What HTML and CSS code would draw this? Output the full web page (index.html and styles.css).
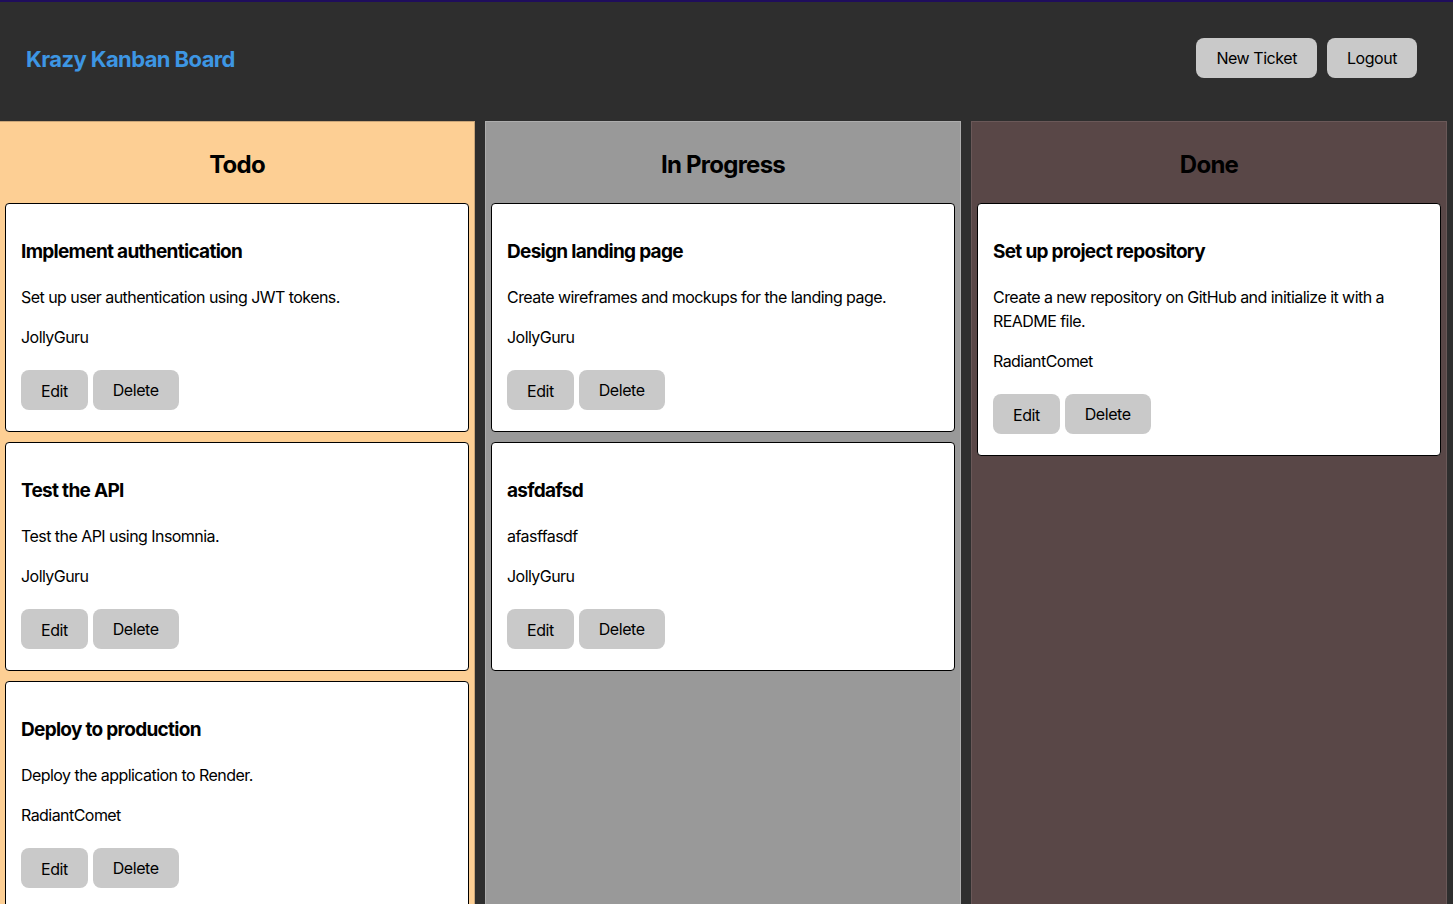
FILE: index.html
```html
<!DOCTYPE html>
<html lang="en">
<head>
<meta charset="utf-8">
<title>Krazy Kanban Board</title>
<link rel="stylesheet" href="styles.css">
</head>
<body>
<header class="nav">
  <h1 class="brand">Krazy Kanban Board</h1>
  <div class="nav-actions">
    <button class="nav-btn">New Ticket</button>
    <button class="nav-btn">Logout</button>
  </div>
</header>
<main class="board">
  <section class="column todo">
    <h2 class="column-title">Todo</h2>
    <article class="card">
      <h3 class="card-title">Implement authentication</h3>
      <p class="card-text">Set up user authentication using JWT tokens.</p>
      <p class="card-text">JollyGuru</p>
      <div class="card-actions"><button class="btn btn-edit">Edit</button><button class="btn">Delete</button></div>
    </article>
    <article class="card">
      <h3 class="card-title">Test the API</h3>
      <p class="card-text">Test the API using Insomnia.</p>
      <p class="card-text">JollyGuru</p>
      <div class="card-actions"><button class="btn btn-edit">Edit</button><button class="btn">Delete</button></div>
    </article>
    <article class="card">
      <h3 class="card-title">Deploy to production</h3>
      <p class="card-text">Deploy the application to Render.</p>
      <p class="card-text">RadiantComet</p>
      <div class="card-actions"><button class="btn btn-edit">Edit</button><button class="btn">Delete</button></div>
    </article>
  </section>
  <section class="column progress">
    <h2 class="column-title">In Progress</h2>
    <article class="card">
      <h3 class="card-title">Design landing page</h3>
      <p class="card-text">Create wireframes and mockups for the landing page.</p>
      <p class="card-text">JollyGuru</p>
      <div class="card-actions"><button class="btn btn-edit">Edit</button><button class="btn">Delete</button></div>
    </article>
    <article class="card">
      <h3 class="card-title">asfdafsd</h3>
      <p class="card-text">afasffasdf</p>
      <p class="card-text">JollyGuru</p>
      <div class="card-actions"><button class="btn btn-edit">Edit</button><button class="btn">Delete</button></div>
    </article>
  </section>
  <section class="column done">
    <h2 class="column-title">Done</h2>
    <article class="card">
      <h3 class="card-title">Set up project repository</h3>
      <p class="card-text">Create a new repository on GitHub and initialize it with a README file.</p>
      <p class="card-text">RadiantComet</p>
      <div class="card-actions"><button class="btn btn-edit">Edit</button><button class="btn">Delete</button></div>
    </article>
  </section>
</main>
</body>
</html>
```

FILE: styles.css
```css
* { box-sizing: border-box; }

html, body {
  margin: 0;
  padding: 0;
  background: #2e2e2e;
  font-family: Inter, "Noto Sans", sans-serif;
  color: #000;
}

body {
  border-top: 2px solid #1f0d5c;
  overflow: hidden;
  height: 904px;
}

.nav {
  height: 119px;
  display: flex;
  align-items: center;
  justify-content: space-between;
  padding: 0 36px 7px 26px;
}

.brand {
  margin: 0 0 -2px;
  font-size: 22px;
  font-weight: 700;
  color: #3d96e3;
  letter-spacing: -0.6px;
}

.nav-actions {
  display: flex;
  gap: 10px;
}

.nav-btn {
  font-family: Inter, "Noto Sans", sans-serif;
  font-size: 16px;
  letter-spacing: -0.45px;
  height: 40px;
  padding: 0 20px;
  border: none;
  border-radius: 8px;
  background: #c9c9c9;
  color: #000;
}

.board {
  display: flex;
  gap: 10px;
  margin-left: -1px;
  align-items: stretch;
  height: 800px;
}

.column {
  width: 476px;
  flex: none;
  border: 1px solid;
  padding: 0 5px;
}

.todo { background: #fdcf94; border-color: #c9a578; }
.progress { background: #999999; border-color: #adadad; }
.done { background: #594747; border-color: #6a5858; }

.column-title {
  margin: 25px 0 20px;
  text-align: center;
  font-size: 24px;
  line-height: 36px;
  font-weight: 700;
  letter-spacing: -0.75px;
}

.card {
  background: #fff;
  border: 1px solid #000;
  border-radius: 4px;
  padding: 15px 15px 21px;
  margin-bottom: 10px;
}

.card-title {
  margin: 19px 0 19px;
  font-size: 19px;
  line-height: 28px;
  font-weight: 700;
  letter-spacing: -0.7px;
}

.card-text {
  margin: 0 0 16px;
  font-size: 16px;
  line-height: 24px;
  letter-spacing: -0.55px;
}

.card-actions {
  display: flex;
  gap: 5px;
  margin-top: 21px;
}

.btn {
  font-family: Inter, "Noto Sans", sans-serif;
  font-size: 16px;
  letter-spacing: -0.45px;
  height: 40px;
  padding: 0 20px;
  border: none;
  border-radius: 8px;
  background: #c9c9c9;
  color: #000;
}

.btn-edit {
  padding-top: 2px;
}
```
